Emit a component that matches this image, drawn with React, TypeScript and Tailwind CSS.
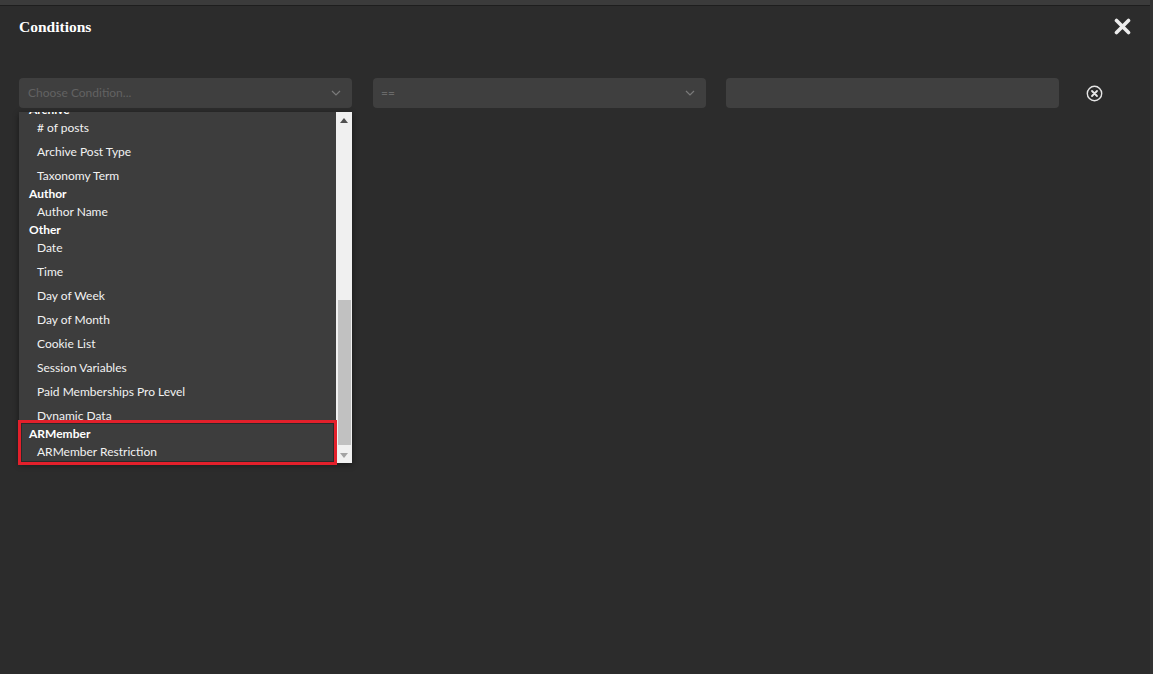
import React from 'react';

type Row = { label: string; header?: boolean };

const rows: Row[] = [
  { label: 'Archive', header: true },
  { label: '# of posts' },
  { label: 'Archive Post Type' },
  { label: 'Taxonomy Term' },
  { label: 'Author', header: true },
  { label: 'Author Name' },
  { label: 'Other', header: true },
  { label: 'Date' },
  { label: 'Time' },
  { label: 'Day of Week' },
  { label: 'Day of Month' },
  { label: 'Cookie List' },
  { label: 'Session Variables' },
  { label: 'Paid Memberships Pro Level' },
  { label: 'Dynamic Data' },
  { label: 'ARMember', header: true },
  { label: 'ARMember Restriction' },
];

const Chevron = () => (
  <svg width="10" height="6" viewBox="0 0 10 6" fill="none">
    <path d="M1 1l4 4 4-4" stroke="#7a7a7a" strokeWidth="1.2" />
  </svg>
);

const ConditionList = () => (
  <div className="absolute left-0 top-[34px] z-10 flex h-[351px] w-[333px] bg-[#3d3d3d] shadow-[0_2px_6px_rgba(0,0,0,0.45)]">
    <div className="flex-1 overflow-hidden">
      {/* list is scrolled down: "Archive" header sits half under the top edge */}
      <div className="mt-[-11px]">
        {rows.map((row, i) => {
          const prev = rows[i - 1];
          const gap = !row.header && prev && !prev.header;
          return row.header ? (
            <div key={row.label} className="pl-[10px] text-[12px] font-bold leading-[18px] text-white">
              {row.label}
            </div>
          ) : (
            <div
              key={row.label}
              className={gap ? 'mt-[6px] pl-[18px] text-[12px] leading-[18px] text-[#f2f2f2]' : 'pl-[18px] text-[12px] leading-[18px] text-[#f2f2f2]'}
            >
              {row.label}
            </div>
          );
        })}
      </div>
    </div>
    {/* native-looking scrollbar */}
    <div className="flex w-[16px] flex-col bg-[#f0f0f0]">
      <div className="flex h-[17px] items-center justify-center">
        <svg width="8" height="5" viewBox="0 0 8 5">
          <path d="M0 5L4 0L8 5Z" fill="#505050" />
        </svg>
      </div>
      <div className="flex-1 pt-[172px] pb-[2px]">
        <div className="mx-auto h-[145px] w-[13px] bg-[#c1c1c1]" />
      </div>
      <div className="flex h-[17px] items-center justify-center">
        <svg width="8" height="5" viewBox="0 0 8 5">
          <path d="M0 0L4 5L8 0Z" fill="#a3a3a3" />
        </svg>
      </div>
    </div>
    <div className="pointer-events-none absolute left-[-1px] top-[308px] h-[45px] w-[319px] border-[3px] border-[#e3202b] shadow-[inset_0_0_0_1px_#2a2a2a]" />
  </div>
);

export default function App() {
  return (
    <div className="relative h-[674px] w-full overflow-hidden bg-[#2c2c2c] font-['Lato','Open_Sans',sans-serif]">
      <div className="h-[6px] border-b border-[#1e1e1e] bg-[#3b3b3b]" />
      <div className="flex items-start justify-between pl-[19px] pr-[22px] pt-[11px]">
        <h1 className="font-['Liberation_Serif',serif] text-[15.5px] font-bold leading-[20px] text-white">Conditions</h1>
        <button className="mt-[1px]">
          <svg width="17" height="17" viewBox="0 0 17 17">
            <path d="M2.5 2.5L14.5 14.5M14.5 2.5L2.5 14.5" stroke="#ececec" strokeWidth="3.6" strokeLinecap="round" />
          </svg>
        </button>
      </div>

      <div className="mt-[41px] flex items-center pl-[19px]">
        <div className="relative">
          <div className="flex h-[30px] w-[333px] items-center justify-between rounded-[4px] bg-[#3f3f3f] pl-[9px] pr-[11px]">
            <span className="text-[12px] text-[#626262]">Choose Condition...</span>
            <Chevron />
          </div>
          <ConditionList />
        </div>
        <div className="ml-[21px] flex h-[30px] w-[333px] items-center justify-between rounded-[4px] bg-[#3f3f3f] pl-[8px] pr-[11px]">
          <span className="text-[12px] text-[#6a6a6a]">==</span>
          <Chevron />
        </div>
        <div className="ml-[20px] h-[30px] w-[333px] rounded-[4px] bg-[#404040]" />
        <button className="ml-[27px] mt-[1px]">
          <svg width="17" height="17" viewBox="0 0 17 17" fill="none">
            <circle cx="8.5" cy="8.5" r="7.2" stroke="#e6e6e6" strokeWidth="1.4" />
            <path d="M6 6l5 5M11 6l-5 5" stroke="#e6e6e6" strokeWidth="1.8" strokeLinecap="round" />
          </svg>
        </button>
      </div>
      <div className="absolute right-0 top-0 h-full w-[3px] bg-[#333]" />
    </div>
  );
}
